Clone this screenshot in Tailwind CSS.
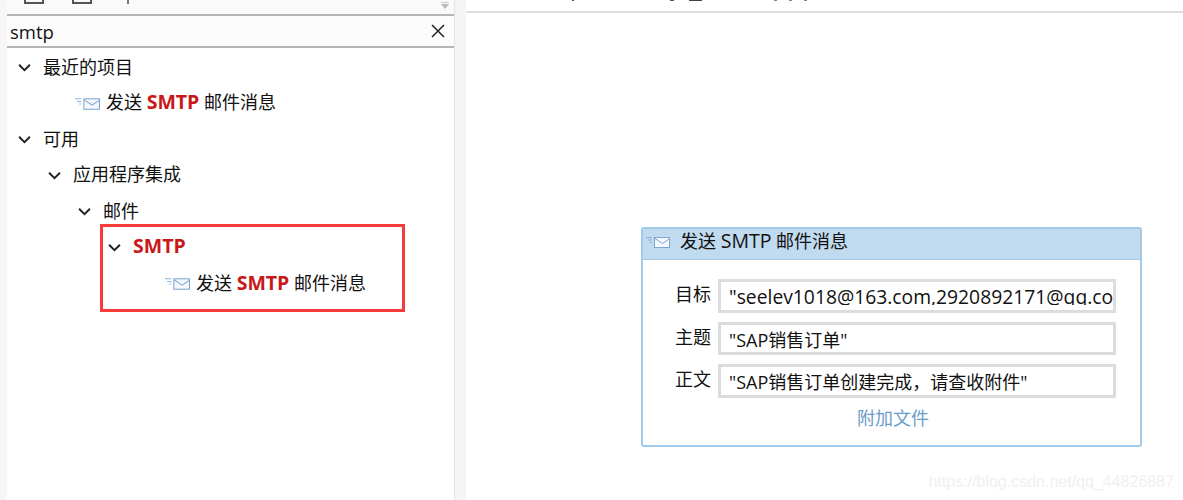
<!DOCTYPE html>
<html lang="zh-CN">
<head>
<meta charset="UTF-8" />
<title>SMTP</title>
<script src="https://cdn.jsdelivr.net/npm/@tailwindcss/browser@4"></script>
</head>
<body class="w-[1183px] h-[500px] overflow-hidden bg-white text-[18px] leading-[36px] text-[#111] font-['Open_Sans','Noto_Sans_CJK_SC',sans-serif]">
<svg class="hidden">
  <symbol id="mail" viewBox="0 0 24 12">
    <path d="M0 1.500h6M2 4h4M4 6.500h2" stroke="#8fb0d6" stroke-width="1" fill="none" />
    <rect x="8.500" y="1.500" width="15" height="10" fill="#f4f8fc" stroke="#7fa4d2" />
    <path d="M9 2.500l7.500 5 7.500-5" stroke="#7fa4d2" fill="none" />
  </symbol>
  <symbol id="chev" viewBox="0 0 12 8">
    <path d="M1 1.500l5 5 5-5" stroke="#222" stroke-width="1.800" fill="none" />
  </symbol>
</svg>
<div class="flex h-[500px]">
  <div class="w-[7px] bg-[#f6f6f6]"></div>

  <aside class="w-[447px] flex flex-col bg-white">
    <div class="h-[14px] shrink-0 overflow-hidden bg-[#fafafa] flex items-end relative">
      <div class="flex items-start h-[5px] self-start">
        <div class="ml-[17px] w-[20px] h-[4px] border-x-2 border-b-2 border-[#555]"></div>
        <div class="ml-[28px] w-[20px] h-[4px] border-x-2 border-b-2 border-[#555]"></div>
        <div class="ml-[35px] w-[8px] h-[4px] border-l-2 border-[#777]"></div>
      </div>
      <div class="absolute right-[5px] top-[2px] flex flex-col gap-[1px]">
        <div class="w-[8px] h-[1px] bg-[#ccc]"></div>
        <div class="w-0 h-0 border-x-[4px] border-x-transparent border-t-[5px] border-t-[#bbb]"></div>
      </div>
    </div>
    <div class="h-[34px] shrink-0 flex items-center justify-between border-y-2 border-[#b5b5b5] bg-[#fcfcfc] pl-[3px] pr-[9px]">
      <span class="mt-[1px] text-[18.500px]">smtp</span>
      <svg class="w-[14px] h-[14px]" viewBox="0 0 14 14"><path d="M1 1l12 12M13 1L1 13" stroke="#222" stroke-width="1.500" /></svg>
    </div>
    <ul class="pt-[1px]">
      <li class="h-[36px] flex items-center pl-[11px]">
        <svg class="w-[13px] h-[9px] mr-[12px]"><use href="#chev" /></svg><span>最近的项目</span>
      </li>
      <li class="h-[36px] flex items-center pl-[68px]">
        <svg class="w-[25px] h-[13px] mr-[6px]"><use href="#mail" /></svg><span class="mb-[2px]">发送 <b class="text-[#c8191a] text-[19.500px]">SMTP</b> 邮件消息</span>
      </li>
      <li class="h-[36px] flex items-center pl-[11px]">
        <svg class="w-[13px] h-[9px] mr-[12px]"><use href="#chev" /></svg><span>可用</span>
      </li>
      <li class="h-[36px] flex items-center pl-[41px]">
        <svg class="w-[13px] h-[9px] mr-[12px]"><use href="#chev" /></svg><span class="mb-[2px]">应用程序集成</span>
      </li>
      <li class="h-[36px] flex items-center pl-[71px]">
        <svg class="w-[13px] h-[9px] mr-[12px]"><use href="#chev" /></svg><span>邮件</span>
      </li>
      <li class="relative h-[36px] flex items-center pl-[101px]">
        <svg class="w-[13px] h-[9px] mr-[12px]"><use href="#chev" /></svg><b class="mb-[2px] text-[#c8191a] text-[19.500px]">SMTP</b>
        <div class="absolute left-[93px] top-[-5px] w-[305px] h-[88px] border-[3px] border-[#f93a3a]"></div>
      </li>
      <li class="h-[36px] flex items-center pl-[158px]">
        <svg class="w-[25px] h-[13px] mr-[6px]"><use href="#mail" /></svg><span>发送 <b class="text-[#c8191a] text-[19.500px]">SMTP</b> 邮件消息</span>
      </li>
    </ul>
  </aside>

  <div class="w-[12px] bg-[#f5f5f5] border-l border-[#e4e4e4]"></div>

  <main class="relative flex-1 bg-white">
    <div class="h-[13px] border-b-2 border-[#dedede] overflow-hidden">
      <div class="flex h-[1px]">
        <div class="ml-[106px] w-[2px] bg-[#555]"></div>
        <div class="ml-[96px] w-[4px] bg-[#555]"></div>
        <div class="ml-[15px] w-[13px] bg-[#444]"></div>
        <div class="ml-[72px] w-[3px] bg-[#888]"></div>
        <div class="ml-[12px] w-[3px] bg-[#888]"></div>
        <div class="ml-[12px] w-[3px] bg-[#888]"></div>
      </div>
    </div>

    <section class="ml-[175px] mt-[214px] w-[501px] h-[220px] rounded-[3px] border-2 border-[#a3cbe9] bg-white overflow-hidden">
      <header class="h-[31px] flex items-center bg-[#c0daef] border-b border-[#a3cbe9] pl-[3px] pb-[4px]">
        <svg class="w-[24px] h-[12px] mr-[10px]"><use href="#mail" /></svg><span class="mb-[2px]">发送 <span class="text-[19.500px]">SMTP</span> 邮件消息</span>
      </header>
      <div class="flex flex-col gap-[9px] pt-[19px] pr-[24px]">
        <div class="flex items-center h-[34px]">
          <label class="w-[75px] text-right pb-[4px] pr-[7px]">目标</label>
          <div class="flex-1 h-[34px] border-[3px] border-[#dcdcdc] pl-[8px] overflow-hidden whitespace-nowrap">
            <div class="h-[23px] overflow-hidden text-[19.300px] leading-[30px]">"seelev1018@163.com,2920892171@qq.co</div>
          </div>
        </div>
        <div class="flex items-center h-[33px]">
          <label class="w-[75px] text-right pb-[4px] pr-[7px]">主题</label>
          <div class="flex-1 h-[33px] border-[3px] border-[#dcdcdc] pl-[8px] leading-[30px] overflow-hidden whitespace-nowrap">"SAP销售订单"</div>
        </div>
        <div class="flex items-center h-[34px]">
          <label class="w-[75px] text-right pb-[4px] pr-[7px]">正文</label>
          <div class="flex-1 h-[34px] border-[3px] border-[#dcdcdc] pl-[8px] leading-[30px] overflow-hidden whitespace-nowrap">"SAP销售订单创建完成，请查收附件"</div>
        </div>
      </div>
      <div class="text-center text-[#6a9cc9] leading-[40px] pl-[3px]">附加文件</div>
    </section>

    <div class="absolute right-[9px] bottom-[8px] text-[16px] leading-[20px] text-[#f0f0f0] font-['Liberation_Sans',sans-serif]">https://blog.csdn.net/qq_44826887</div>
  </main>
</div>
</body>
</html>
